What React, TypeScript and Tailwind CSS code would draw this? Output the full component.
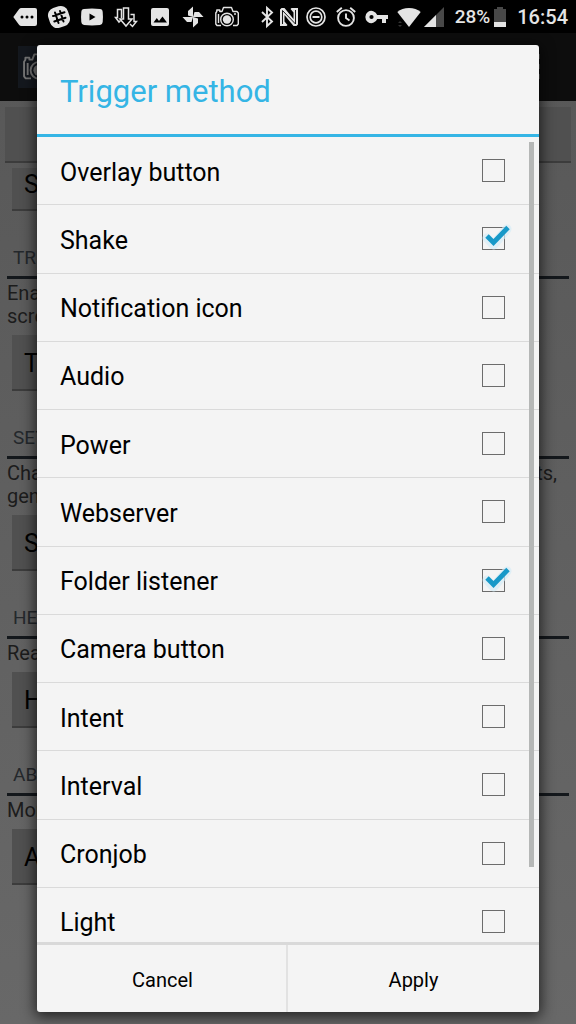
import { useState } from "react";
import type { ReactNode } from "react";

const methods = [
  "Overlay button",
  "Shake",
  "Notification icon",
  "Audio",
  "Power",
  "Webserver",
  "Folder listener",
  "Camera button",
  "Intent",
  "Interval",
  "Cronjob",
  "Light",
];

function Camera({ className }: { className: string }) {
  return (
    <svg viewBox="0 0 24 24" className={className} fill="none" stroke="currentColor" strokeWidth="1.4" strokeLinejoin="round">
      <path d="M6 20.500H2L.8 19V8l1-1.500V5h3v1.500H7L8.500 2.500h8L18 6.500h4L23.300 8v11L22 20.500h-4" />
      <path d="M3.500 9v9M19 9h2" />
      <circle cx="12" cy="14.500" r="6.300" />
      <circle cx="12" cy="14.500" r="4.200" fill="currentColor" stroke="none" />
    </svg>
  );
}

function StatusBar() {
  return (
    <header className="relative z-20 flex h-[33px] items-center justify-between bg-black pr-2 pl-[13px] text-[#e4e4e4]">
      <div className="flex w-[226px] items-center justify-between">
        <svg viewBox="0 0 24 24" className="size-6" fill="currentColor">
          <path fillRule="evenodd" d="M.3 12 6 4.200Q6.900 3 8.500 3H22q2 0 2 2v14q0 2-2 2H8.500Q6.900 21 6 19.800ZM9 10.500a1.500 1.500 0 1 0 0 3a1.500 1.500 0 1 0 0-3m5 0a1.500 1.500 0 1 0 0 3a1.500 1.500 0 1 0 0-3m5 0a1.500 1.500 0 1 0 0 3a1.500 1.500 0 1 0 0-3" />
        </svg>
        <svg viewBox="0 0 24 24" className="size-6">
          <rect x="1.700" y="1.700" width="20.600" height="20.600" rx="7.500" fill="currentColor" transform="rotate(-18 12 12)" />
          <path d="M8 7.500l3.500 10.500M13 6l3.500 10.500M6 11l11.500-3.800M7.300 16.500l11.200-3.800" stroke="#000" strokeWidth="2" strokeLinecap="round" />
        </svg>
        <svg viewBox="0 0 24 24" className="size-6">
          <path fill="currentColor" fillRule="evenodd" d="M4 4Q12 3.200 20 4 22.500 4.200 22.700 7 23.200 12 22.700 17 22.500 19.800 20 20 12 20.800 4 20 1.500 19.800 1.300 17 .8 12 1.300 7 1.500 4.200 4 4M9.500 8.500v7l6-3.500z" />
        </svg>
        <svg viewBox="0 0 24 24" className="size-6" fill="none" stroke="currentColor" strokeWidth="1.500">
          <path d="M6.500 15.500L5 17 1.500 12.500h2V4.500h4V13" />
          <path d="M16.500 9.500h3.500v7h2.500l-4 5-2.500-2.500" />
          <path d="M9.500 3h5v11H18l-6 7-6-7h3.500z" />
        </svg>
        <svg viewBox="0 0 24 24" className="size-6" fill="currentColor">
          <path fillRule="evenodd" d="M5 3h14q2 0 2 2v14q0 2-2 2H5q-2 0-2-2V5q0-2 2-2M5.500 17.500h13.500l-4.500-6-3.500 4.600-2.200-3z" />
        </svg>
        <svg viewBox="0 0 24 24" className="size-6" fill="currentColor">
          <path d="M12 12V1.500L7 6v4.500zM12 12h10.500L18 7h-4.500zM12 12v10.500l5-4.500v-4.500zM12 12H1.500L6 17h4.500z" />
        </svg>
        <Camera className="size-6" />
      </div>
      <div className="flex items-center">
        <svg viewBox="0 0 14 24" className="h-6 w-3.5" fill="none" stroke="currentColor" strokeWidth="1.900">
          <path d="M2 7l10 9.500-5 4.500V3l5 4.500L2 17" />
        </svg>
        <svg viewBox="0 0 20 24" className="ml-[5px] h-6 w-5" fill="currentColor">
          <path d="M1 21V4.500L2.500 3h3l9 11V7.500L11.500 4l1-1H19v16.500L17.500 21h-3l-9-11v6.500l3 3.500-1 1z" />
          <path d="M3.500 19V5.500l13 13.500V5" fill="none" stroke="#000" strokeWidth="0.900" />
        </svg>
        <svg viewBox="0 0 20 24" className="ml-[7px] h-6 w-5" fill="none" stroke="currentColor" strokeWidth="1.700">
          <circle cx="10" cy="12" r="9" />
          <circle cx="10" cy="12" r="5.800" />
          <path d="M6.500 12h7" strokeWidth="2" />
        </svg>
        <svg viewBox="0 0 20 24" className="ml-2.5 h-6 w-5" fill="none" stroke="currentColor" strokeWidth="1.900">
          <circle cx="10" cy="13" r="7.900" />
          <path d="M10 8.500V13l3.500 2.500M.8 7l5-4.300M19.200 7l-5-4.300" />
        </svg>
        <svg viewBox="0 0 24 24" className="ml-[9px] size-6" fill="currentColor">
          <path fillRule="evenodd" d="M12.200 10a6.100 6.100 0 1 0 0 4H17v4h4v-4h2v-4zM6.500 9.900a2.100 2.100 0 1 1 0 4.200a2.100 2.100 0 1 1 0-4.200" />
        </svg>
        <svg viewBox="0 0 24 24" className="ml-2 size-6" fill="currentColor">
          <path d="M12 22 .3 7Q5 3 12 3t11.700 4z" />
          <path d="M1 18l2-2 2 2zM1 20l2 2 2-2z" fill="#333" />
        </svg>
        <svg viewBox="0 0 20 24" className="ml-[3px] h-6 w-5">
          <path d="M20 2v20H0z" fill="#484848" />
          <path d="M12 10v12H0z" fill="currentColor" />
        </svg>
        <span className="ml-[11px] text-[19px] leading-6 font-medium">28%</span>
        <svg viewBox="0 0 14 24" className="ml-[3px] h-6 w-3.5">
          <path d="M4 2h6v2h3v18H1V4h3z" fill="#484848" />
          <path d="M1 17h12v5H1z" fill="currentColor" />
        </svg>
        <span className="ml-2.5 text-[20px] leading-6 font-medium">16:54</span>
      </div>
    </header>
  );
}

function Section({ title, button, end, children }: { title: string; button: string; end?: string; children: ReactNode }) {
  return (
    <section className="px-[7px] pt-[29px]">
      <h2 className="h-[36px] px-1.5 text-[19px] leading-[36px] text-[#24282c]">{title}</h2>
      <div className="h-[3px] bg-[#14181c]" />
      <div className="flex justify-between pt-[3px] text-[20px] leading-[23px] text-[#1c1c1c]">
        <p>{children}</p>
        {end && <p className="pr-3">{end}</p>}
      </div>
      <BackButton>{button}</BackButton>
    </section>
  );
}

function BackButton({ children }: { children: ReactNode }) {
  return (
    <button type="button" className="mt-[7px] ml-[5px] block h-[56px] w-1/4 border-b-2 border-[#3c3c3c] bg-[#505050] px-3 pt-1 text-left text-[25px] text-black">
      {children}
    </button>
  );
}

function Background() {
  return (
    <div>
      <div className="flex h-[68px] items-center justify-between bg-[#0d0d0d] pr-[35px] pl-[18px]">
        <div className="flex size-[42px] items-center justify-center bg-[#14181e] text-[#777]">
          <Camera className="size-8" />
        </div>
        <svg viewBox="0 0 6 28" className="h-7 w-1.5" fill="#444">
          <path d="M0 1h5v5H0zM0 11h5v5H0zM0 21h5v5H0z" />
        </svg>
      </div>
      <div className="px-[5px] pt-[6px]">
        <div className="h-[56px] border-b-2 border-[#3c3c3c] bg-[#505050]" />
      </div>
      <div className="mt-[5px] h-[43px] px-3">
        <button type="button" className="block h-full w-1/4 border-b-2 border-[#3c3c3c] bg-[#505050] px-3 pb-2 text-left text-[25px] leading-[30px] text-black">
          S
        </button>
      </div>
      <Section title="TR" button="T">
        Ena
        <br />
        scre
      </Section>
      <Section title="SET" button="S" end="ts,">
        Cha
        <br />
        gen
      </Section>
      <Section title="HE" button="H">
        Rea
      </Section>
      <Section title="AB" button="A">
        Mor
      </Section>
    </div>
  );
}

function MethodRow({ name, checked, onToggle }: { name: string; checked: boolean; onToggle: () => void }) {
  return (
    <label className="flex items-center justify-between border-b border-[#dadada] pr-[34px] pl-[23px] text-[25px] leading-[30px] text-black">
      <span className="pt-1">{name}</span>
      <span className="relative size-[23px]">
        <input type="checkbox" checked={checked} onChange={onToggle} className="block size-full appearance-none border border-[#6c6c6c]" />
        {checked && (
          <svg viewBox="0 0 36 32" className="pointer-events-none absolute -top-1 -left-1 h-8 w-9">
            <path d="M9 15l6.500 7L29 6" fill="none" stroke="#d5edf7" strokeOpacity="0.7" strokeWidth="9" strokeLinecap="round" strokeLinejoin="round" />
            <path d="M9 13l6.500 6.500L30 4.500" fill="none" stroke="#1899c8" strokeWidth="4.800" />
          </svg>
        )}
      </span>
    </label>
  );
}

export default function App() {
  const [selected, setSelected] = useState(["Shake", "Folder listener"]);
  const toggle = (name: string) =>
    setSelected((list) => (list.includes(name) ? list.filter((n) => n !== name) : [...list, name]));

  return (
    <div className="relative h-screen overflow-hidden bg-linear-to-b from-[#575757] to-[#686868] font-[Roboto,sans-serif]">
      <StatusBar />
      <Background />
      <div
        role="dialog"
        aria-labelledby="dialog-title"
        className="absolute inset-x-[37px] top-[45px] bottom-[12px] z-10 flex flex-col overflow-hidden rounded-[3px] bg-[#f4f4f4] shadow-[0_3px_14px_2px_rgba(0,0,0,0.65)]"
      >
        <h1 id="dialog-title" className="h-[92px] shrink-0 border-b-[3px] border-[#35b5e5] px-[23px] text-[31px] leading-[94px] text-[#35b5e5]">
          Trigger method
        </h1>
        <div className="relative min-h-0 flex-1 overflow-hidden">
          <div className="grid h-[819px] grid-rows-12">
            {methods.map((name) => (
              <MethodRow key={name} name={name} checked={selected.includes(name)} onToggle={() => toggle(name)} />
            ))}
          </div>
          <div className="absolute top-[5px] right-[5px] h-9/10 w-[5px] bg-[#b5b7b6]" />
        </div>
        <div className="grid h-[70px] shrink-0 grid-cols-2 border-t-[3px] border-[#d9d9d9] text-[20px] text-black">
          <button type="button" className="border-r-2 border-[#e2e2e2] pt-0.5 pl-0.5">Cancel</button>
          <button type="button" className="pt-0.5">Apply</button>
        </div>
      </div>
    </div>
  );
}
